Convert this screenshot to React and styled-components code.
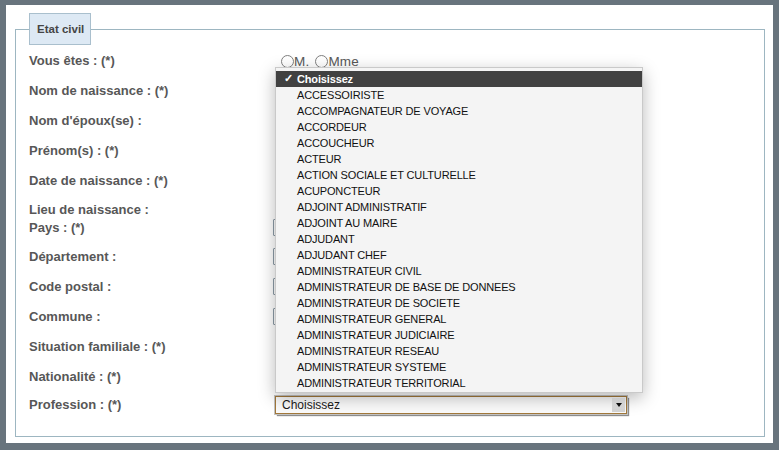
import React from "react";
import styled, { createGlobalStyle } from "styled-components";

const GlobalStyle = createGlobalStyle`
    html, body {
        margin: 0;
        padding: 0;
        background: #68747d;
    }
    body {
        font-family: "Liberation Sans", Arial, Helvetica, sans-serif;
    }
`;

const professions = [
    "ACCESSOIRISTE",
    "ACCOMPAGNATEUR DE VOYAGE",
    "ACCORDEUR",
    "ACCOUCHEUR",
    "ACTEUR",
    "ACTION SOCIALE ET CULTURELLE",
    "ACUPONCTEUR",
    "ADJOINT ADMINISTRATIF",
    "ADJOINT AU MAIRE",
    "ADJUDANT",
    "ADJUDANT CHEF",
    "ADMINISTRATEUR CIVIL",
    "ADMINISTRATEUR DE BASE DE DONNEES",
    "ADMINISTRATEUR DE SOCIETE",
    "ADMINISTRATEUR GENERAL",
    "ADMINISTRATEUR JUDICIAIRE",
    "ADMINISTRATEUR RESEAU",
    "ADMINISTRATEUR SYSTEME",
    "ADMINISTRATEUR TERRITORIAL",
];

const Page = styled.div`
    margin: 5px 6px 0 6px;
    width: 767px;
    height: 438px;
    box-sizing: border-box;
    background: #fff;
    padding: 8px 8px 0 9px;
`;

const Fieldset = styled.fieldset`
    margin: 0;
    height: 424px;
    box-sizing: border-box;
    border: 1px solid #9db6c1;
    padding: 0 13px 16px 13px;
`;

const Legend = styled.legend`
    padding: 9px 6px 8px 7px;
    background: #dde9f4;
    border: 1px solid #a9bfcd;
    font-size: 11.5px;
    font-weight: bold;
    color: #454545;
    line-height: 13px;
`;

const Row = styled.div`
    display: flex;
    align-items: center;
    height: ${p => p.$h || 30}px;
    margin-top: ${p => p.$mt || 0}px;
`;

const Label = styled.div`
    width: 244px;
    flex: none;
    font-size: 13px;
    font-weight: bold;
    color: #575757;
`;

const Radios = styled.div`
    display: flex;
    align-items: center;
    margin-left: 8px;
    margin-top: 2px;
    font-size: 13.5px;
    color: #585858;
    letter-spacing: 0.2px;
`;

const Radio = styled.span`
    display: inline-block;
    flex: none;
    width: 11px;
    height: 11px;
    border: 1px solid #808080;
    border-radius: 50%;
    margin-right: 0;
    margin-left: ${p => p.$ml || 0}px;
`;

const TextInput = styled.div`
    width: 300px;
    height: 17px;
    box-sizing: border-box;
    border: 1px solid #8c9ba6;
    border-radius: 1px;
    background: #fff;
`;

const SelectWrap = styled.div`
    position: relative;
    margin-left: 2px;
`;

const Select = styled.div`
    width: 352px;
    height: 18px;
    box-sizing: border-box;
    border: 1px solid #a3793b;
    background: #fbfbfb;
    box-shadow: 0 0 0 1px #c3c3c3, 2px 2px 1px #8e8e8e;
    display: flex;
    align-items: center;
    justify-content: space-between;
    padding-left: 6px;
    font-size: 12px;
    color: #1a1a1a;
`;

const Arrow = styled.span`
    width: 13px;
    height: 14px;
    margin-right: 1px;
    background: linear-gradient(#ececec, #d4d4d4);
    display: flex;
    align-items: center;
    justify-content: center;

    &::after {
        content: "";
        border-left: 3.5px solid transparent;
        border-right: 3.5px solid transparent;
        border-top: 4px solid #111;
    }
`;

const Menu = styled.div`
    position: absolute;
    left: 0;
    bottom: calc(100% + 3px);
    width: 368px;
    box-sizing: border-box;
    padding: 3px 0 1px 0;
    background: #f4f4f4;
    border: 1px solid #c9c9c9;
    box-shadow: 0 5px 16px rgba(0, 0, 0, 0.28);
    z-index: 2;
`;

const Option = styled.div`
    height: 16px;
    display: flex;
    align-items: center;
    padding-left: 21px;
    font-size: 11px;
    letter-spacing: -0.15px;
    white-space: nowrap;
    color: ${p => (p.$selected ? "#fff" : "#111")};
    background: ${p => (p.$selected ? "#414141" : "transparent")};
    font-weight: ${p => (p.$selected ? "bold" : "normal")};
    position: relative;
`;

const Check = styled.span`
    position: absolute;
    left: 8px;
    top: 1px;
    font-size: 11px;
    font-weight: bold;
`;

export default function App() {
    return (
        <>
            <GlobalStyle />
            <Page>
                <Fieldset>
                    <Legend>Etat civil</Legend>
                    <Row>
                        <Label>Vous êtes : (*)</Label>
                        <Radios>
                            <Radio />M.
                            <Radio $ml={6} />Mme
                        </Radios>
                    </Row>
                    <Row><Label>Nom de naissance : (*)</Label></Row>
                    <Row><Label>Nom d'époux(se) :</Label></Row>
                    <Row><Label>Prénom(s) : (*)</Label></Row>
                    <Row><Label>Date de naissance : (*)</Label></Row>
                    <Row $h={18} $mt={5}><Label>Lieu de naissance :</Label></Row>
                    <Row $h={18}>
                        <Label>Pays : (*)</Label>
                        <TextInput />
                    </Row>
                    <Row $mt={5}>
                        <Label>Département :</Label>
                        <TextInput />
                    </Row>
                    <Row>
                        <Label>Code postal :</Label>
                        <TextInput />
                    </Row>
                    <Row>
                        <Label>Commune :</Label>
                        <TextInput />
                    </Row>
                    <Row><Label>Situation familiale : (*)</Label></Row>
                    <Row><Label>Nationalité : (*)</Label></Row>
                    <Row $h={27}>
                        <Label>Profession : (*)</Label>
                        <SelectWrap>
                            <Select>
                                Choisissez
                                <Arrow />
                            </Select>
                            <Menu>
                                <Option $selected>
                                    <Check>✓</Check>Choisissez
                                </Option>
                                {professions.map(p => (
                                    <Option key={p}>{p}</Option>
                                ))}
                            </Menu>
                        </SelectWrap>
                    </Row>
                </Fieldset>
            </Page>
        </>
    );
}
